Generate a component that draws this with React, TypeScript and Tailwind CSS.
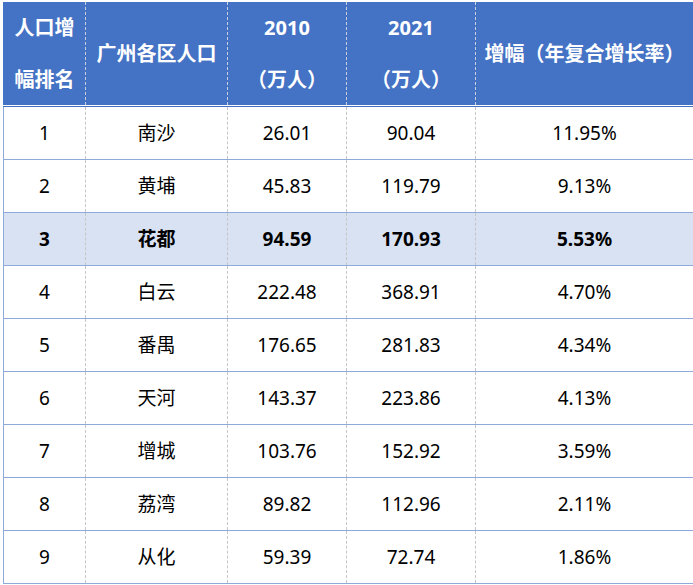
const rows = [
  { rank: "1", name: "南沙", a: "26.01", b: "90.04", g: "11.95%" },
  { rank: "2", name: "黄埔", a: "45.83", b: "119.79", g: "9.13%" },
  { rank: "3", name: "花都", a: "94.59", b: "170.93", g: "5.53%", hi: true },
  { rank: "4", name: "白云", a: "222.48", b: "368.91", g: "4.70%" },
  { rank: "5", name: "番禺", a: "176.65", b: "281.83", g: "4.34%" },
  { rank: "6", name: "天河", a: "143.37", b: "223.86", g: "4.13%" },
  { rank: "7", name: "增城", a: "103.76", b: "152.92", g: "3.59%" },
  { rank: "8", name: "荔湾", a: "89.82", b: "112.96", g: "2.11%" },
  { rank: "9", name: "从化", a: "59.39", b: "72.74", g: "1.86%" },
];

const cols = "grid grid-cols-[82px_142px_119px_129px_217px]";
const headCell = "flex flex-col items-center justify-center border-r border-dashed border-[#c9cfdc]";
const cell = "flex items-center justify-center border-r border-dashed border-[#c6c6c6]";

export default function App() {
  return (
    <div
      className="w-[693px] h-[585px] bg-white pt-[2px] pl-[3px] text-black"
      style={{ fontFamily: '"Noto Sans", "Noto Sans CJK SC", sans-serif' }}
    >
      {/* header */}
      <div className={`${cols} h-[103px] bg-[#4472c4] text-white font-bold text-[20px] pl-px`}>
        <div className={`${headCell} gap-[22px] leading-[30px]`}>
          <span>人口增</span>
          <span>幅排名</span>
        </div>
        <div className={headCell}>广州各区人口</div>
        <div className={`${headCell} gap-[22px] leading-[30px]`}>
          <span>2010</span>
          <span>（万人）</span>
        </div>
        <div className={`${headCell} gap-[22px] leading-[30px]`}>
          <span>2021</span>
          <span>（万人）</span>
        </div>
        <div className="flex items-center justify-center">增幅（年复合增长率）</div>
      </div>
      <div className="h-px bg-white" />
      <div className="h-px bg-[#4472c4]" />

      {/* body */}
      <div className="border-l border-[#8eaadb]">
        {rows.map((r) => (
          <div
            key={r.rank}
            className={`${cols} h-[53px] border-b border-[#8eaadb] text-[19px] ${
              r.hi ? "bg-[#d9e2f3] font-bold" : ""
            }`}
          >
            <div className={cell}>{r.rank}</div>
            <div className={cell}>{r.name}</div>
            <div className={cell}>{r.a}</div>
            <div className={cell}>{r.b}</div>
            <div className="flex items-center justify-center">{r.g}</div>
          </div>
        ))}
      </div>
    </div>
  );
}
